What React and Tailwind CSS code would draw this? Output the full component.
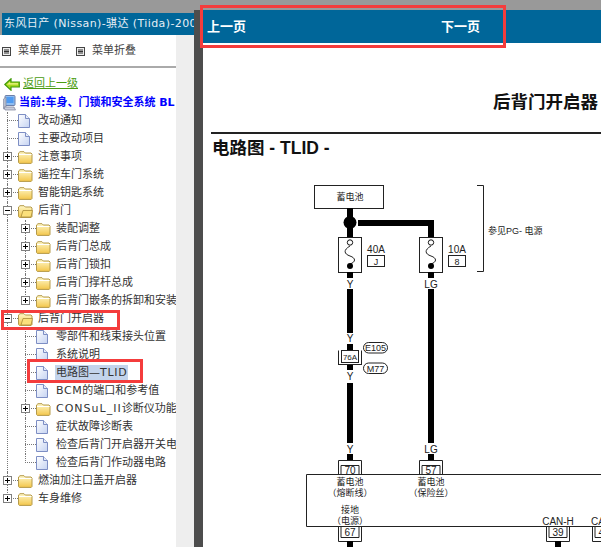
import React from "react";

const cjk = "font-['DejaVu_Sans','Noto_Sans_CJK_SC',sans-serif]";
const arial = "font-['Liberation_Sans','Noto_Sans_CJK_SC',sans-serif]";

const ListIcon = () => (
  <svg width="9" height="9" viewBox="0 0 9 9" className="shrink-0">
    <rect x="0.5" y="0.5" width="8" height="8" fill="#eee" stroke="#444" />
    <path d="M2 3h5M2 4.5h5M2 6h5" stroke="#333" />
  </svg>
);

const BackArrow = () => (
  <svg width="16" height="13" viewBox="0 0 16 13" className="shrink-0">
    <path d="M0.8 6.5 L7 0.8 V4 H15.3 V9 H7 V12.2 Z" fill="#a6d81e" stroke="#3f9a08" strokeWidth="1.2" />
    <path d="M3 6.5 L6 4 V5.2 H14 V6.4 H4 Z" fill="#eef58a" />
  </svg>
);

const Computer = () => (
  <svg width="13" height="16" viewBox="0 0 13 16" className="shrink-0">
    <rect x="2" y="0.5" width="10" height="10" rx="1" fill="#8fbdf0" stroke="#6d7fa8" />
    <rect x="3.5" y="2" width="7" height="6" fill="#4f9af0" />
    <path d="M0.5 4 L3 2 V13 L0.5 14 Z" fill="#b9bfce" stroke="#7b819a" strokeWidth="0.6" />
    <path d="M1 12 H11 L12.5 15 H2 Z" fill="#c9cddb" stroke="#7b819a" strokeWidth="0.7" />
  </svg>
);

const Folder = ({ open }) => (
  <svg width="15" height="13" viewBox="0 0 15 13" className="shrink-0">
    <defs>
      <linearGradient id="fold" x1="0" y1="0" x2="0" y2="1">
        <stop offset="0" stopColor="#fff8c8" />
        <stop offset="1" stopColor="#f3c64a" />
      </linearGradient>
    </defs>
    <path d="M0.5 11.5 V2 L2 0.7 H6 L7.3 2 H13 L14 3 V11.5 L13.2 12.4 H1.3 Z" fill="url(#fold)" stroke="#b59a4a" />
    {open ? (
      <path d="M3 12 L5 5.5 H14.5 L13 12 Z" fill="#fbe07c" stroke="#a88b3a" strokeWidth="0.8" />
    ) : (
      <path d="M1 3.5 H13.5" stroke="#fff" />
    )}
  </svg>
);

const Doc = () => (
  <svg width="12" height="14" viewBox="0 0 12 14" className="shrink-0">
    <defs>
      <linearGradient id="page" x1="0" y1="0" x2="1" y2="1">
        <stop offset="0" stopColor="#ffffff" />
        <stop offset="1" stopColor="#c5d3f2" />
      </linearGradient>
    </defs>
    <path d="M0.5 0.5 H7.5 L11.5 4.5 V13.5 H0.5 Z" fill="url(#page)" stroke="#7d8ec4" />
    <path d="M7.5 0.5 V4.5 H11.5" fill="#e8edf9" stroke="#7d8ec4" />
  </svg>
);

const Box = ({ open }) => (
  <span className="absolute left-[3px] top-[4px] z-10 flex h-[9px] w-[9px] items-center justify-center border border-[#808080] bg-white">
    <span className="absolute h-px w-[5px] bg-black" />
    {!open && <span className="absolute h-[5px] w-px bg-black" />}
  </span>
);

// one line of the tree, the gutter holds the dots and the +/- box
const Row = ({ text, folder, open, last, selected }) => (
  <div className="flex h-[18px] items-center whitespace-nowrap">
    <div className="relative h-full w-[18px] shrink-0">
      <span className="absolute left-[7px] right-0 top-[8px] border-t border-dotted border-[#777]" />
      <span
        className={`absolute left-[7px] top-0 border-l border-dotted border-[#777] ${last ? "h-[9px]" : "h-full"}`}
      />
      {folder && <Box open={open} />}
    </div>
    {folder ? <Folder open={open} /> : <Doc />}
    <span
      className={`text-[11px] leading-[16px] text-[#333] ${folder ? "ml-[5px]" : selected ? "ml-[7px]" : "ml-[8px]"} ${
        selected ? "bg-[#c3d4ec] px-px" : ""
      }`}
    >
      {text}
    </span>
  </div>
);

// children of an open folder, the parent's dots keep running on the left
const Group = ({ children }) => (
  <div className="ml-[7px] border-l border-dotted border-[#777] pl-[10px]">{children}</div>
);

const RedBox = ({ className }) => (
  <div className={`pointer-events-none absolute z-20 border-[3px] border-[#f43c3c] ${className}`} />
);

const Tree = () => (
  <div>
    <Row text="改动通知" />
    <Row text="主要改动项目" />
    <Row text="注意事项" folder />
    <Row text="遥控车门系统" folder />
    <Row text="智能钥匙系统" folder />
    <Row text="后背门" folder open />
    <Group>
      <Row text="装配调整" folder />
      <Row text="后背门总成" folder />
      <Row text="后背门锁扣" folder />
      <Row text="后背门撑杆总成" folder />
      <Row text="后背门嵌条的拆卸和安装" folder last />
    </Group>
    <Row text="后背门开启器" folder open />
    <Group>
      <Row text="零部件和线束接头位置" />
      <Row text="系统说明" />
      <Row
        text={
          <>
            电路图—<span className="tracking-[0.7px]">TLID</span>
          </>
        }
        selected
      />
      <Row
        text={
          <>
            <span className="tracking-[0.6px]">BCM</span>的端口和参考值
          </>
        }
      />
      <Row
        text={
          <>
            <span className="tracking-[1px]">CONSuL_II</span>诊断仪功能
          </>
        }
        folder
      />
      <Row text="症状故障诊断表" />
      <Row text="检查后背门开启器开关电路" />
      <Row text="检查后背门作动器电路" last />
    </Group>
    <Row text="燃油加注口盖开启器" folder />
    <Row text="车身维修" folder last />
  </div>
);

const Wire = ({ x, y1, y2 }) => <rect x={x - 3} y={y1} width="6" height={y2 - y1} fill="#000" />;

const Label = ({ x, y, children, size = 9, anchor = "middle" }) => (
  <text x={x} y={y} fontSize={size} textAnchor={anchor} fill="#222" fontFamily="'Liberation Sans','Noto Sans CJK SC',sans-serif">
    {children}
  </text>
);

const Fuse = ({ x }) => (
  <g>
    <rect x={x - 11.5} y="237.5" width="23" height="35" fill="#fff" stroke="#222" />
    <path
      d={`M${x} 246 C${x - 7} 250 ${x - 6} 254 ${x} 256 C${x + 6} 258 ${x + 6} 262 ${x} 264`}
      fill="none"
      stroke="#222"
      strokeWidth="1"
    />
    <circle cx={x} cy="242.5" r="2.7" fill="#fff" stroke="#111" />
    <circle cx={x} cy="266" r="3" fill="#000" />
  </g>
);

// connector above the big box, double bracket with the pin number
const PinTop = ({ x, n }) => (
  <g>
    <path d={`M${x - 11.5} 474 V460.5 H${x + 11.5} V474`} fill="none" stroke="#222" />
    <path d={`M${x - 9} 474 V465.5 H${x + 9} V474`} fill="#fff" stroke="#222" />
    <Label x={x} y="473.5" size="10">{n}</Label>
  </g>
);

const PinBottom = ({ x, n }) => (
  <g>
    <path d={`M${x - 11.5} 527 V541.5 H${x + 11.5} V527`} fill="none" stroke="#222" />
    <path d={`M${x - 9} 527 V537.5 H${x + 9} V527`} fill="#fff" stroke="#222" />
    <Label x={x} y="536" size="10">{n}</Label>
  </g>
);

const Diagram = () => (
  <svg width="398" height="387" viewBox="203 160 398 387" className="block">
    <rect x="314.5" y="185.5" width="69" height="23" fill="#fff" stroke="#222" />
    <Label x="350" y="200">蓄电池</Label>
    <Wire x={350} y1={208} y2={238} />
    <circle cx="350" cy="222.5" r="6.5" fill="#000" />
    <rect x="358" y="220" width="76" height="6" fill="#000" />
    <Wire x={431} y1={220} y2={238} />
    <Fuse x={350} />
    <Fuse x={431} />
    <Label x="376" y="253" size="10">40A</Label>
    <rect x="367.5" y="255.5" width="17" height="11" fill="#fff" stroke="#222" />
    <Label x="376" y="265">J</Label>
    <Label x="457" y="253" size="10">10A</Label>
    <rect x="448.5" y="255.5" width="17" height="11" fill="#fff" stroke="#222" />
    <Label x="457" y="265">8</Label>
    <path d="M477 185.5 H483.5 V271.5 H477" fill="none" stroke="#222" />
    <Label x="488" y="234" anchor="start">参见PG- 电源</Label>

    <Wire x={350} y1={272} y2={278} />
    <Label x="350" y="288" size="10">Y</Label>
    <Wire x={350} y1={289} y2={333} />
    <Label x="350" y="342" size="10">Y</Label>
    <Wire x={350} y1={344} y2={351} />
    <Wire x={431} y1={272} y2={278} />
    <Label x="431" y="288" size="10">LG</Label>
    <Wire x={431} y1={289} y2={443} />

    <path d="M338.5 350.5 V365 M361.5 350.5 V365" stroke="#222" />
    <rect x="341.5" y="350.5" width="17" height="12" fill="#fff" stroke="#222" />
    <Label x="350" y="360" size="8">76A</Label>
    <path d="M338.5 364.5 H361.5" stroke="#222" />
    <rect x="363.5" y="342.5" width="24" height="10.5" rx="5.2" fill="#fff" stroke="#222" />
    <Label x="375.5" y="351">E105</Label>
    <rect x="363.5" y="363" width="24" height="10.5" rx="5.2" fill="#fff" stroke="#222" />
    <Label x="375.5" y="372">M77</Label>

    <Wire x={350} y1={365} y2={370} />
    <Label x="350" y="380" size="10">Y</Label>
    <Wire x={350} y1={383} y2={443} />
    <Label x="350" y="453" size="10">Y</Label>
    <Label x="431" y="453" size="10">LG</Label>
    <Wire x={350} y1={454} y2={461} />
    <Wire x={431} y1={454} y2={461} />

    <PinTop x={350} n="70" />
    <PinTop x={431} n="57" />
    <path d="M601 474.5 H306.5 V526.5 H601" fill="none" stroke="#222" />
    <Label x="350" y="485">蓄电池</Label>
    <Label x="350" y="496">（熔断线）</Label>
    <Label x="350" y="513">接地</Label>
    <Label x="350" y="524">（电源）</Label>
    <Label x="431" y="485">蓄电池</Label>
    <Label x="431" y="496">（保险丝）</Label>
    <Label x="558" y="525" size="10">CAN-H</Label>
    <Label x="591" y="525" size="10" anchor="start">CAN-L</Label>
    <PinBottom x={350} n="67" />
    <PinBottom x={558} n="39" />
    <PinBottom x={604} n="40" />
    <Wire x={350} y1={541} y2={547} />
    <Wire x={558} y1={541} y2={547} />
  </svg>
);

export default function App() {
  return (
    <div className={`relative flex h-[547px] w-[601px] overflow-hidden bg-[#999] ${cjk}`}>
      <div className="flex w-[194px] shrink-0 flex-col pt-[13px]">
        <div className="ml-[2px] h-[22px] shrink-0 overflow-hidden whitespace-nowrap bg-[#006699] pl-[2px] text-[11px] leading-[22px] tracking-[0.4px] text-[#e6eef5]">
          东风日产 (Nissan)-骐达 (Tiida)-2005款
        </div>
        <div className="flex min-h-0 flex-1">
          <div className="w-[176px] shrink-0 overflow-hidden bg-white">
            <div className="flex h-[31px] items-center gap-[7px] pl-[2px] pt-[1px] text-[11px] text-[#444]">
              <ListIcon />
              <span>菜单展开</span>
              <span className="ml-[7px] flex items-center">
                <ListIcon />
              </span>
              <span>菜单折叠</span>
            </div>
            <div className="h-[2px] bg-[#aaa]" />
            <div className="flex h-[26px] items-center gap-[3px] pl-[4px] pt-[6px] text-[11px]">
              <BackArrow />
              <span className="text-[#4a9c10] underline">返回上一级</span>
            </div>
            <div className="flex h-[18px] items-center gap-[4px] whitespace-nowrap pl-[3px] text-[11px] font-bold text-[#0000ff]">
              <Computer />
              <span className="ml-[-1px]">当前:车身、门锁和安全系统 BL</span>
            </div>
            <Tree />
          </div>
          <div className="flex-1 bg-[#eee]" />
        </div>
      </div>

      <div className="mt-[10px] w-[9px] shrink-0 bg-[#4d4d4d]" />

      <div className="mt-[10px] min-w-0 flex-1 bg-white">
        <div className={`flex h-[34px] items-center border-b border-white bg-[#006699] pl-[4px] text-[13px] font-bold text-white ${arial}`}>
          <span className="w-[234px]">上一页</span>
          <span>下一页</span>
        </div>
        <div className={`pr-[3px] pt-[47px] text-right text-[17.5px] font-bold leading-[22px] text-[#111] ${arial}`}>
          后背门开启器
        </div>
        <div className="ml-[8px] mt-[19px] h-[2px] bg-[#222]" />
        <div className={`pb-px pl-[9px] pt-[3px] text-[17.5px] font-bold leading-[22px] text-[#111] ${arial}`}>
          电路图 - TLID -
        </div>
        <Diagram />
      </div>

      <RedBox className="left-[200px] top-[5px] h-[43px] w-[306px]" />
      <RedBox className="left-[1px] top-[310px] h-[20px] w-[119px]" />
      <RedBox className="left-[27px] top-[359px] h-[24px] w-[116px]" />
    </div>
  );
}
